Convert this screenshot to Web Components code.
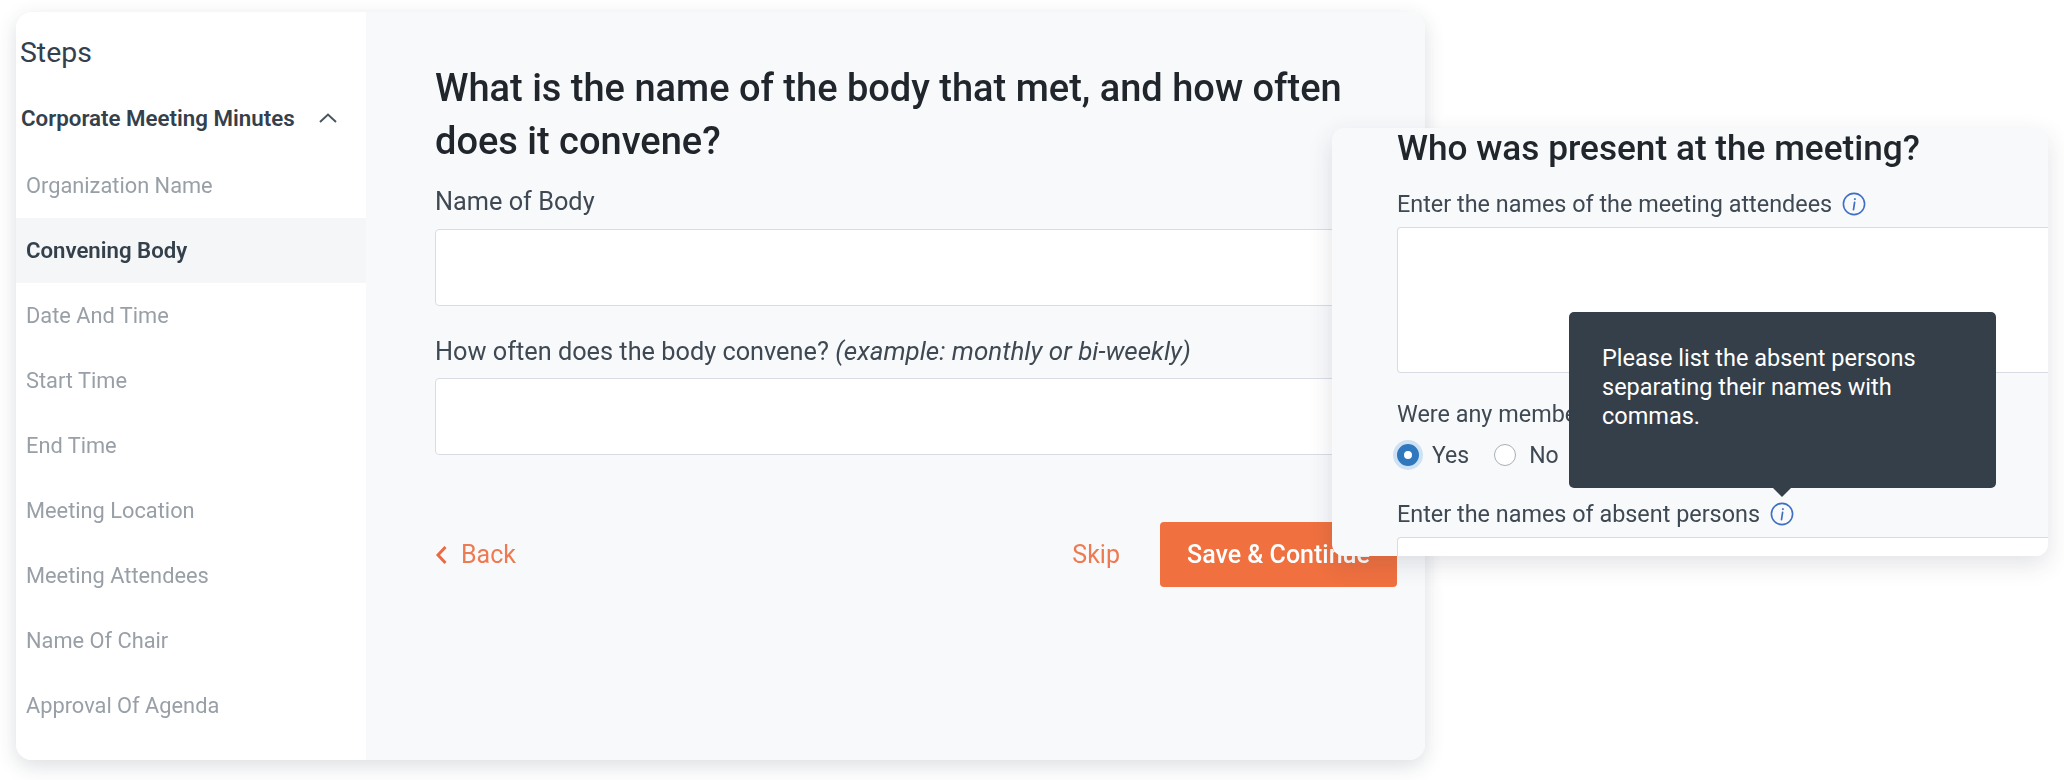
<!DOCTYPE html>
<html>
<head>
<meta charset="utf-8">
<style>
  html, body { margin: 0; padding: 0; background: #fff; }
  body { font-family: Roboto, "Liberation Sans", sans-serif; width: 2064px; height: 780px; overflow: hidden; }
</style>
</head>
<body>
<div id="root"></div>
<script>
const infoIcon = `<svg width="24" height="24" viewBox="0 0 24 24" fill="none" stroke="#3f6fc4">
  <circle cx="12" cy="12" r="10.6" stroke-width="1.6"/>
  <path d="M12.6 10.4 11.5 17.6" stroke-width="1.7" stroke-linecap="round"/>
  <circle cx="12.9" cy="7.1" r="0.6" fill="#3f6fc4" stroke-width="1"/>
</svg>`;

class StepItem extends HTMLElement {
  constructor() {
    super();
    this.attachShadow({ mode: 'open' });
    this.shadowRoot.innerHTML = `
      <style>
        :host {
          display: flex;
          align-items: center;
          height: 65px;
          padding-left: 10px;
          font-size: 21.8px;
          line-height: 30px;
          color: #989fa6;
        }
        :host([active]) {
          background: #f4f6f8;
          color: #34404b;
          font-size: 22.2px;
          font-weight: 600;
          padding-bottom: 2px;
          height: 63px;
        }
      </style>
      <slot></slot>
    `;
  }
}

class StepSidebar extends HTMLElement {
  constructor() {
    super();
    this.attachShadow({ mode: 'open' });
    this.shadowRoot.innerHTML = `
      <style>
        :host {
          display: block;
          width: 350px;
          flex: none;
          background: #fff;
        }
        h2 {
          margin: 0;
          padding: 23px 0 0 4px;
          height: 60px;
          box-sizing: border-box;
          font-size: 28.4px;
          line-height: 36px;
          font-weight: 400;
          color: #34404b;
        }
        .group {
          display: flex;
          align-items: center;
          height: 70px;
          margin-top: 11px;
          padding-left: 5px;
          font-size: 22.3px;
          font-weight: 600;
          color: #34404b;
        }
        .group svg { margin-left: 23px; }
      </style>
      <h2>Steps</h2>
      <div class="group">Corporate Meeting Minutes
        <svg width="20" height="12" viewBox="0 0 20 12" fill="none" stroke="#4a5560" stroke-width="2"><path d="M2 10 10 2.5 18 10"/></svg>
      </div>
      <slot></slot>
    `;
  }
}

class FormField extends HTMLElement {
  constructor() {
    super();
    this.attachShadow({ mode: 'open' });
    this.shadowRoot.innerHTML = `
      <style>
        :host { display: block; }
        label {
          display: flex;
          align-items: center;
          gap: 10px;
          height: 32px;
          font-size: var(--label-size, 25.3px);
          line-height: 32px;
          color: #3f4953;
        }
        .box {
          box-sizing: border-box;
          background: #fff;
          border: 1.5px solid #d9dce3;
          border-radius: 4px;
          height: var(--box-height, 77px);
          margin-top: var(--box-gap, 12px);
        }
        :host([open-right]) .box {
          border-right: 0;
          border-radius: 4px 0 0 4px;
        }
      </style>
      <label><span><slot></slot></span><slot name="hint"></slot></label>
      <div class="box"></div>
    `;
  }
}

class FormActions extends HTMLElement {
  constructor() {
    super();
    this.attachShadow({ mode: 'open' });
    this.shadowRoot.innerHTML = `
      <style>
        :host {
          display: flex;
          align-items: center;
          height: 65px;
          font-size: 25px;
          color: #ee7a52;
        }
        .back { display: flex; align-items: center; gap: 13px; }
        .skip { margin-left: auto; margin-right: 40px; }
        .save {
          width: 237px;
          height: 65px;
          display: flex;
          align-items: center;
          justify-content: center;
          background: #f0703f;
          color: #fff;
          font-weight: 500;
          border-radius: 4px;
        }
      </style>
      <span class="back">
        <svg width="13" height="22" viewBox="0 0 13 22" fill="none" stroke="#ea6a45" stroke-width="3"><path d="M10.5 3 3 11l7.5 8"/></svg>
        Back
      </span>
      <span class="skip">Skip</span>
      <span class="save">Save &amp; Continue</span>
    `;
  }
}

class FormPanel extends HTMLElement {
  constructor() {
    super();
    this.attachShadow({ mode: 'open' });
    this.shadowRoot.innerHTML = `
      <style>
        :host {
          display: block;
          flex: 1;
          box-sizing: border-box;
          padding: 50px 28px 0 69px;
        }
        h1 {
          margin: 0;
          font-size: 38px;
          line-height: 53px;
          font-weight: 500;
          color: #20262c;
        }
        form-field { margin-top: 18px; --box-gap: 11px; }
        form-field + form-field { margin-top: 29px; }
        form-actions { margin-top: 67px; }
        em { font-style: italic; font-size: 26px; }
      </style>
      <h1>What is the name of the body that met, and how often does it convene?</h1>
      <form-field>Name of Body</form-field>
      <form-field>How often does the body convene? <em>(example: monthly or bi-weekly)</em></form-field>
      <form-actions></form-actions>
    `;
  }
}

class InfoTip extends HTMLElement {
  constructor() {
    super();
    this.attachShadow({ mode: 'open' });
    this.shadowRoot.innerHTML = `
      <style>
        :host { display: inline-flex; position: relative; width: 24px; height: 24px; }
        .tip {
          position: absolute;
          left: -201px;
          bottom: 38px;
          width: 427px;
          height: 176px;
          box-sizing: border-box;
          padding: 32px 30px 0 33px;
          background: #343f4a;
          border-radius: 5px;
          color: #fff;
          font-size: 23.5px;
          line-height: 29px;
        }
        .tip::after {
          content: "";
          position: absolute;
          left: 204px;
          top: 100%;
          border: 9px solid transparent;
          border-top-color: #343f4a;
          border-bottom-width: 0;
        }
      </style>
      ${infoIcon}
      <div class="tip"><slot></slot></div>
    `;
    if (!this.textContent.trim()) this.shadowRoot.querySelector('.tip').style.display = 'none';
  }
}

class RadioOption extends HTMLElement {
  constructor() {
    super();
    this.attachShadow({ mode: 'open' });
    this.shadowRoot.innerHTML = `
      <style>
        :host {
          display: inline-flex;
          align-items: center;
          gap: 13px;
          font-size: 23px;
          color: #3f4953;
        }
        i {
          box-sizing: border-box;
          width: 22px;
          height: 22px;
          border-radius: 50%;
          background: #fff;
          border: 1.5px solid #a9afb6;
        }
        :host([checked]) i {
          border: 7px solid #2f78bd;
          box-shadow: 0 0 0 4px #cfe2f3;
        }
      </style>
      <i></i><slot></slot>
    `;
  }
}

class AttendeeCard extends HTMLElement {
  constructor() {
    super();
    this.attachShadow({ mode: 'open' });
    this.shadowRoot.innerHTML = `
      <style>
        :host {
          display: block;
          position: absolute;
          left: 1332px;
          top: 128px;
          width: 716px;
          height: 428px;
          box-sizing: border-box;
          padding-left: 65px;
          background: #f8f9fb;
          border-radius: 12px;
          box-shadow: 0 8px 24px rgba(40, 50, 70, 0.14);
          overflow: hidden;
          --label-size: 23.4px;
        }
        h3 {
          margin: 0;
          font-size: 35.2px;
          line-height: 40px;
          font-weight: 500;
          color: #20262c;
        }
        .top { --box-height: 146px; --box-gap: 7px; margin-top: 20px; }
        .question { margin-top: 25px; font-size: 23.4px; line-height: 32px; color: #3f4953; }
        .radios { display: flex; gap: 25px; margin-top: 9px; height: 32px; align-items: center; }
        .bottom { margin-top: 27px; --box-height: 60px; --box-gap: 7px; }
      </style>
      <h3>Who was present at the meeting?</h3>
      <form-field class="top" open-right>Enter the names of the meeting attendees <info-tip slot="hint"></info-tip></form-field>
      <div class="question">Were any members absent?</div>
      <div class="radios">
        <radio-option checked>Yes</radio-option>
        <radio-option>No</radio-option>
      </div>
      <form-field class="bottom" open-right>Enter the names of absent persons <info-tip slot="hint">Please list the absent persons separating their names with commas.</info-tip></form-field>
    `;
  }
}

class MeetingApp extends HTMLElement {
  constructor() {
    super();
    this.attachShadow({ mode: 'open' });
    this.shadowRoot.innerHTML = `
      <style>
        :host {
          display: block;
          position: relative;
          width: 2064px;
          height: 780px;
          padding: 12px 0 0 16px;
          box-sizing: border-box;
          filter: blur(0.4px);
        }
        .card {
          display: flex;
          width: 1409px;
          height: 748px;
          background: #f8f9fb;
          border-radius: 16px;
          overflow: hidden;
        }
        .shadow {
          border-radius: 16px;
          width: 1409px;
          box-shadow: 0 6px 20px rgba(40, 50, 70, 0.16);
        }
      </style>
      <div class="shadow">
        <div class="card">
          <step-sidebar>
            <step-item>Organization Name</step-item>
            <step-item active>Convening Body</step-item>
            <step-item>Date And Time</step-item>
            <step-item>Start Time</step-item>
            <step-item>End Time</step-item>
            <step-item>Meeting Location</step-item>
            <step-item>Meeting Attendees</step-item>
            <step-item>Name Of Chair</step-item>
            <step-item>Approval Of Agenda</step-item>
          </step-sidebar>
          <form-panel></form-panel>
        </div>
      </div>
      <attendee-card></attendee-card>
    `;
  }
}

customElements.define('step-item', StepItem);
customElements.define('step-sidebar', StepSidebar);
customElements.define('form-field', FormField);
customElements.define('form-actions', FormActions);
customElements.define('form-panel', FormPanel);
customElements.define('info-tip', InfoTip);
customElements.define('radio-option', RadioOption);
customElements.define('attendee-card', AttendeeCard);
customElements.define('meeting-app', MeetingApp);

document.getElementById('root').innerHTML = '<meeting-app></meeting-app>';
</script>
</body>
</html>
